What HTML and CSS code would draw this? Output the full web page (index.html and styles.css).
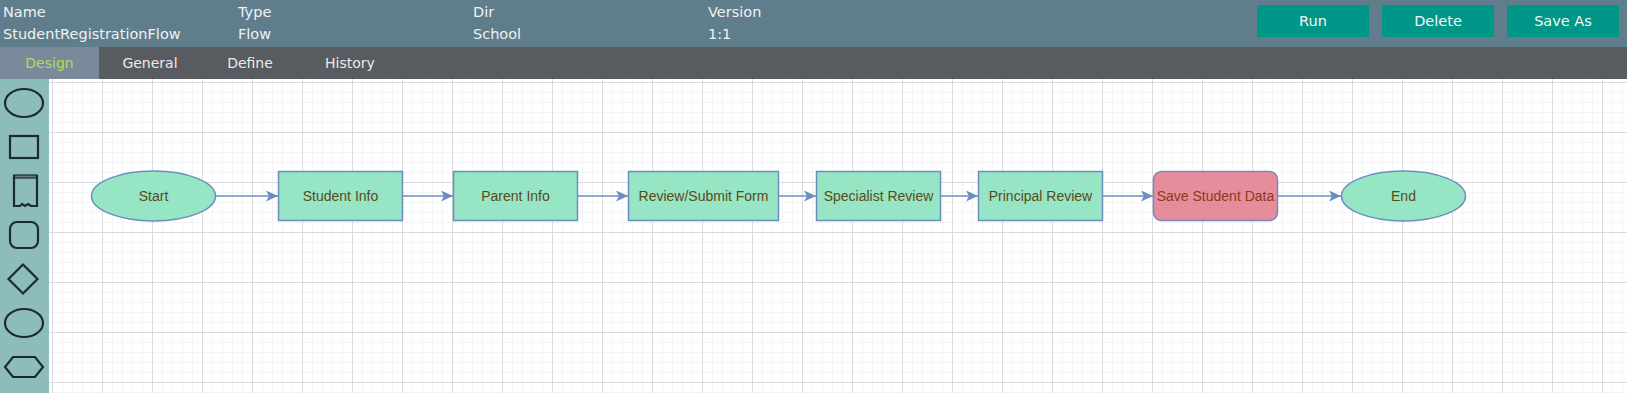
FILE: index.html
```html
<!DOCTYPE html>
<html lang="en">
<head>
    <meta charset="UTF-8">
    <meta name="viewport" content="width=device-width, initial-scale=1.0">
    <title>Flow Designer</title>
    <link rel="stylesheet" href="styles.css">
</head>
<body>
    <header class="topBar">
        <div class="info">
            <div class="field"><span class="label">Name</span><span class="value">StudentRegistrationFlow</span></div>
            <div class="field"><span class="label">Type</span><span class="value">Flow</span></div>
            <div class="field"><span class="label">Dir</span><span class="value">School</span></div>
            <div class="field"><span class="label">Version</span><span class="value">1:1</span></div>
        </div>
        <div class="actions">
            <button>Run</button>
            <button>Delete</button>
            <button>Save As</button>
        </div>
    </header>
    <nav class="tabs">
        <a class="tab active">Design</a>
        <a class="tab">General</a>
        <a class="tab">Define</a>
        <a class="tab">History</a>
    </nav>
    <section class="workArea">
        <div class="palette">
            <svg class="shape" width="48" height="44" viewBox="0 0 48 44"><ellipse cx="24" cy="22" rx="19" ry="14"/></svg>
            <svg class="shape" width="48" height="44" viewBox="0 0 48 44"><rect x="10" y="11" width="28" height="22"/></svg>
            <svg class="shape" width="48" height="44" viewBox="0 0 48 44"><rect x="14" y="6" width="23" height="3" class="thin"/><path d="M14 6 V37 H20 L22 35 L25 37 L28 35 L31 37 H37 V6"/></svg>
            <svg class="shape" width="48" height="44" viewBox="0 0 48 44"><rect x="10" y="9" width="28" height="26" rx="7"/></svg>
            <svg class="shape" width="48" height="44" viewBox="0 0 48 44"><path d="M23 7.5 L37.5 22 L23 36.5 L8.5 22 Z"/></svg>
            <svg class="shape" width="48" height="44" viewBox="0 0 48 44"><ellipse cx="24" cy="22" rx="19" ry="14"/></svg>
            <svg class="shape" width="48" height="44" viewBox="0 0 48 44"><path d="M13 12 H35 L43 22 L35 32 H13 L5 22 Z"/></svg>
        </div>
        <div class="canvas">
            <svg class="diagram" width="1578" height="314" viewBox="0 0 1578 314">
                <defs>
                    <marker id="arrow" viewBox="0 0 12 11" refX="12" refY="5.5" markerWidth="12" markerHeight="11" markerUnits="userSpaceOnUse" orient="auto">
                        <path d="M0 0 L12 5.5 L0 11 L3 5.5 Z" fill="#6c8ebf"/>
                    </marker>
                </defs>
                <g class="edges">
                    <line x1="167" y1="117" x2="229" y2="117"/>
                    <line x1="354" y1="117" x2="404" y2="117"/>
                    <line x1="529" y1="117" x2="579" y2="117"/>
                    <line x1="730" y1="117" x2="767" y2="117"/>
                    <line x1="892" y1="117" x2="929" y2="117"/>
                    <line x1="1054" y1="117" x2="1104" y2="117"/>
                    <line x1="1229" y1="117" x2="1292" y2="117"/>
                </g>
                <g class="node">
                    <ellipse cx="104.5" cy="117" rx="62" ry="25"/>
                    <text x="104.5" y="117">Start</text>
                </g>
                <g class="node">
                    <rect x="229.5" y="92.5" width="124" height="49"/>
                    <text x="291.5" y="117">Student Info</text>
                </g>
                <g class="node">
                    <rect x="404.5" y="92.5" width="124" height="49"/>
                    <text x="466.5" y="117">Parent Info</text>
                </g>
                <g class="node">
                    <rect x="579.5" y="92.5" width="150" height="49"/>
                    <text x="654.5" y="117">Review/Submit Form</text>
                </g>
                <g class="node">
                    <rect x="767.5" y="92.5" width="124" height="49"/>
                    <text x="829.5" y="117">Specialist Review</text>
                </g>
                <g class="node">
                    <rect x="929.5" y="92.5" width="124" height="49"/>
                    <text x="991.5" y="117">Principal Review</text>
                </g>
                <g class="node save">
                    <rect x="1104.5" y="92.5" width="124" height="49" rx="8"/>
                    <text x="1166.5" y="117">Save Student Data</text>
                </g>
                <g class="node">
                    <ellipse cx="1354.5" cy="117" rx="62" ry="25"/>
                    <text x="1354.5" y="117">End</text>
                </g>
            </svg>
        </div>
    </section>
</body>
</html>
```

FILE: styles.css
```css
* {
    box-sizing: border-box;
}
body {
    margin: 0;
    width: 1627px;
    height: 393px;
    overflow: hidden;
    font-family: "DejaVu Sans", Verdana, sans-serif;
    background-color: #fff;
}
.topBar {
    display: flex;
    justify-content: space-between;
    height: 47px;
    background-color: #5f7d8b;
    color: #eef2f4;
}
.info {
    display: flex;
}
.field {
    display: flex;
    flex-direction: column;
    width: 235px;
    padding: 1px 0 0 3px;
    font-size: 14.5px;
    line-height: 22px;
}
.actions {
    display: flex;
    gap: 13px;
    padding: 5px 8px 0 0;
}
.actions button {
    width: 112px;
    height: 32px;
    border: none;
    background-color: #009688;
    color: #f2f7f6;
    font-family: "DejaVu Sans", Verdana, sans-serif;
    font-size: 14.5px;
}
.tabs {
    display: flex;
    height: 32px;
    background-color: #585c60;
}
.tab {
    width: 100px;
    text-align: center;
    line-height: 32px;
    font-size: 14px;
    color: #ebebeb;
}
.tab.active {
    width: 99px;
    margin-right: 1px;
    background-color: #7a8a9a;
    color: #a8e05c;
}
.workArea {
    display: flex;
    height: 314px;
}
.palette {
    display: flex;
    flex-direction: column;
    width: 49px;
    padding-top: 2px;
    background-color: #8dbcbd;
}
.shape {
    display: block;
}
.shape ellipse,
.shape rect,
.shape path {
    fill: none;
    stroke: #1d2b2c;
    stroke-width: 2.2;
}
.shape .thin {
    fill: #6a7a7a;
    stroke-width: 1.2;
}
.canvas {
    flex: 1;
    overflow: hidden;
    background-color: #fff;
    background-image:
        linear-gradient(to right, #d9dbde 1px, transparent 1px),
        linear-gradient(to bottom, #d9dbde 1px, transparent 1px),
        linear-gradient(to right, #f3f4f5 1px, transparent 1px),
        linear-gradient(to bottom, #f3f4f5 1px, transparent 1px);
    background-size: 50px 50px, 50px 50px, 10px 10px, 10px 10px;
    background-position: 3px 3px;
}
.diagram {
    display: block;
}
.edges line {
    stroke: #6c8ebf;
    stroke-width: 1.5;
    marker-end: url(#arrow);
}
.node ellipse,
.node rect {
    fill: #96e5c4;
    stroke: #6c8ebf;
    stroke-width: 1.5;
}
.node.save rect {
    fill: #e68d9b;
    stroke: #7d86b8;
}
.node text {
    font-family: "Liberation Sans", Arial, sans-serif;
    font-size: 14px;
    fill: #5a4c14;
    text-anchor: middle;
    dominant-baseline: central;
}
.node.save text {
    fill: #8a3a20;
}
```
